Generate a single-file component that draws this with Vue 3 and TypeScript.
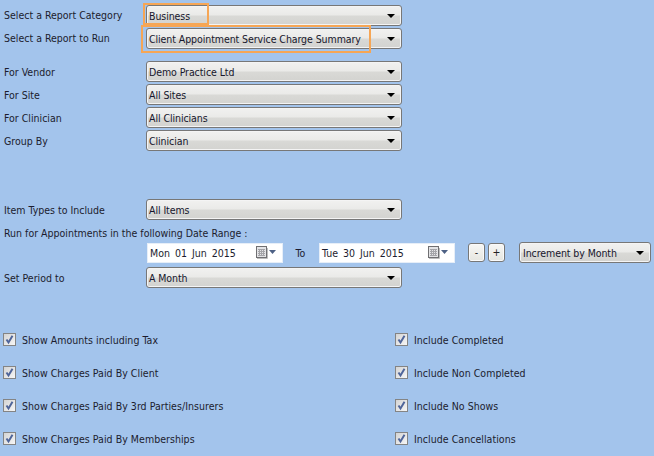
<script setup lang="ts">
const topRows = [
  { label: 'Select a Report Category', value: 'Business' },
  { label: 'Select a Report to Run', value: 'Client Appointment Service Charge Summary' },
]
const midRows = [
  { label: 'For Vendor', value: 'Demo Practice Ltd' },
  { label: 'For Site', value: 'All Sites' },
  { label: 'For Clinician', value: 'All Clinicians' },
  { label: 'Group By', value: 'Clinician' },
]
const dates = ['Mon 01 Jun 2015', 'Tue 30 Jun 2015']
const checks = [
  'Show Amounts including Tax', 'Include Completed',
  'Show Charges Paid By Client', 'Include Non Completed',
  'Show Charges Paid By 3rd Parties/Insurers', 'Include No Shows',
  'Show Charges Paid By Memberships', 'Include Cancellations',
]
</script>

<template>
  <main class="page">
    <section class="group first">
      <div v-for="r in topRows" :key="r.label" class="row">
        <label class="label raised">{{ r.label }}</label>
        <div class="combo"><span class="val">{{ r.value }}</span><i class="arrow"></i></div>
      </div>
      <div class="hl hl-a"></div>
      <div class="hl hl-b"></div>
    </section>

    <section class="group vendor">
      <div v-for="r in midRows" :key="r.label" class="row">
        <label class="label">{{ r.label }}</label>
        <div class="combo"><span class="val">{{ r.value }}</span><i class="arrow"></i></div>
      </div>
    </section>

    <section class="group items">
      <div class="row">
        <label class="label">Item Types to Include</label>
        <div class="combo"><span class="val">All Items</span><i class="arrow"></i></div>
      </div>
    </section>

    <div class="range-title">Run for Appointments in the following Date Range :</div>

    <div class="dates">
      <div v-for="(d, i) in dates" :key="d" class="date-wrap">
        <span v-if="i === 1" class="to">To</span>
        <div class="date">
          <span class="date-text">{{ d }}</span>
          <svg class="cal" width="20" height="13" viewBox="0 0 20 13">
            <rect x="0.5" y="0.5" width="10" height="11" fill="#e4e4e6" stroke="#6f6f72" />
            <path d="M2 3.500h7M2 5.500h7M2 7.500h7M2 9.500h7M3.500 3v7M5.500 3v7M7.500 3v7" stroke="#a4a4a8" fill="none" />
            <path d="M1 12.500h10.500V2" stroke="#bdbdbd" fill="none" />
            <path d="M13 4h7l-3.500 4z" fill="#4d6185" />
          </svg>
        </div>
      </div>
      <button class="step minus">-</button>
      <button class="step">+</button>
      <div class="combo inc"><span class="val">Increment by Month</span><i class="arrow"></i></div>
    </div>

    <section class="group period">
      <div class="row">
        <label class="label">Set Period to</label>
        <div class="combo"><span class="val">A Month</span><i class="arrow"></i></div>
      </div>
    </section>

    <section class="checks">
      <div v-for="c in checks" :key="c" class="check">
        <span class="box">
          <svg width="11" height="11" viewBox="0 0 11 11">
            <path d="M2.500 5.500 L4.500 8.500 L8.500 1.800" fill="none" stroke="#4f659a" stroke-width="2" />
          </svg>
        </span>
        <span class="check-text">{{ c }}</span>
      </div>
    </section>
  </main>
</template>

<style scoped>
.page {
  width: 654px;
  height: 456px;
  overflow: hidden;
  background: #a3c4ec;
  font-family: "DejaVu Sans Condensed", "DejaVu Sans", sans-serif;
  font-stretch: condensed;
  font-size: 10.5px;
  color: #1c1c2e;
  box-sizing: border-box;
}
.group {
  position: relative;
  display: flex;
  flex-direction: column;
  gap: 2px;
  margin-left: 4px;
}
.first { padding-top: 5px; }
.vendor { margin-top: 12px; }
.items { margin-top: 48px; }
.period { margin-top: 4px; }
.row {
  display: flex;
  align-items: center;
  height: 21px;
}
.label {
  width: 142px;
  flex: none;
}
.raised {
  position: relative;
  top: -1px;
}
.combo {
  width: 256px;
  height: 21px;
  box-sizing: border-box;
  border: 1px solid #777;
  border-radius: 3px;
  box-shadow: inset 0 0 0 1px #f4f4f4;
  background: linear-gradient(#f1f1f0 0, #eaeae8 48%, #d9d9d6 52%, #d3d3d0 100%);
  display: flex;
  align-items: center;
  justify-content: space-between;
  padding: 0 6px 0 2px;
  color: #16162c;
}
.val { letter-spacing: -0.08px; }
.arrow {
  width: 0;
  height: 0;
  border-left: 4px solid transparent;
  border-right: 4px solid transparent;
  border-top: 4px solid #000;
}
.hl {
  position: absolute;
  box-sizing: border-box;
  border: 2px solid #f6a655;
  pointer-events: none;
}
.hl-a { left: 139px; top: 3px; width: 66px; height: 22px; }
.hl-b { left: 137px; top: 25px; width: 230px; height: 28px; }
.range-title {
  margin: 6px 0 0 4px;
  height: 14px;
  line-height: 14px;
}
.dates {
  display: flex;
  align-items: center;
  height: 21px;
  margin: 2px 0 0 147px;
}
.date-wrap {
  display: flex;
  align-items: center;
}
.date {
  width: 136px;
  height: 20px;
  box-sizing: border-box;
  background: #fff;
  border: 1px solid #e6eef8;
  display: flex;
  align-items: center;
  justify-content: space-between;
  padding: 0 0 0 2px;
}
.date-text { word-spacing: 2px; }
.cal { margin-right: 6px; }
.to {
  width: 35px;
  padding-right: 1px;
  text-align: center;
}
.step {
  width: 17px;
  height: 19px;
  padding: 0;
  margin-left: 3px;
  border: 1px solid #777;
  border-radius: 3px;
  background: linear-gradient(#f7f7f5, #e6e6e0);
  box-shadow: inset 0 0 0 1px #fafafa;
  font: inherit;
  color: #222;
  line-height: 15px;
}
.minus { margin-left: 13px; }
.inc {
  width: 132px;
  margin-left: 14px;
  padding-left: 3px;
}
.checks {
  display: grid;
  grid-template-columns: 392px 1fr;
  grid-auto-rows: 33px;
  margin-top: 35px;
  padding-left: 3px;
}
.check {
  display: flex;
  align-items: center;
  gap: 6px;
  height: 33px;
}
.check-text { letter-spacing: 0.04px; }
.box {
  width: 13px;
  height: 13px;
  box-sizing: border-box;
  border: 1px solid #848484;
  background: linear-gradient(135deg, #d4d4d4, #f6f6f6);
  display: flex;
  align-items: center;
  justify-content: center;
}
</style>
